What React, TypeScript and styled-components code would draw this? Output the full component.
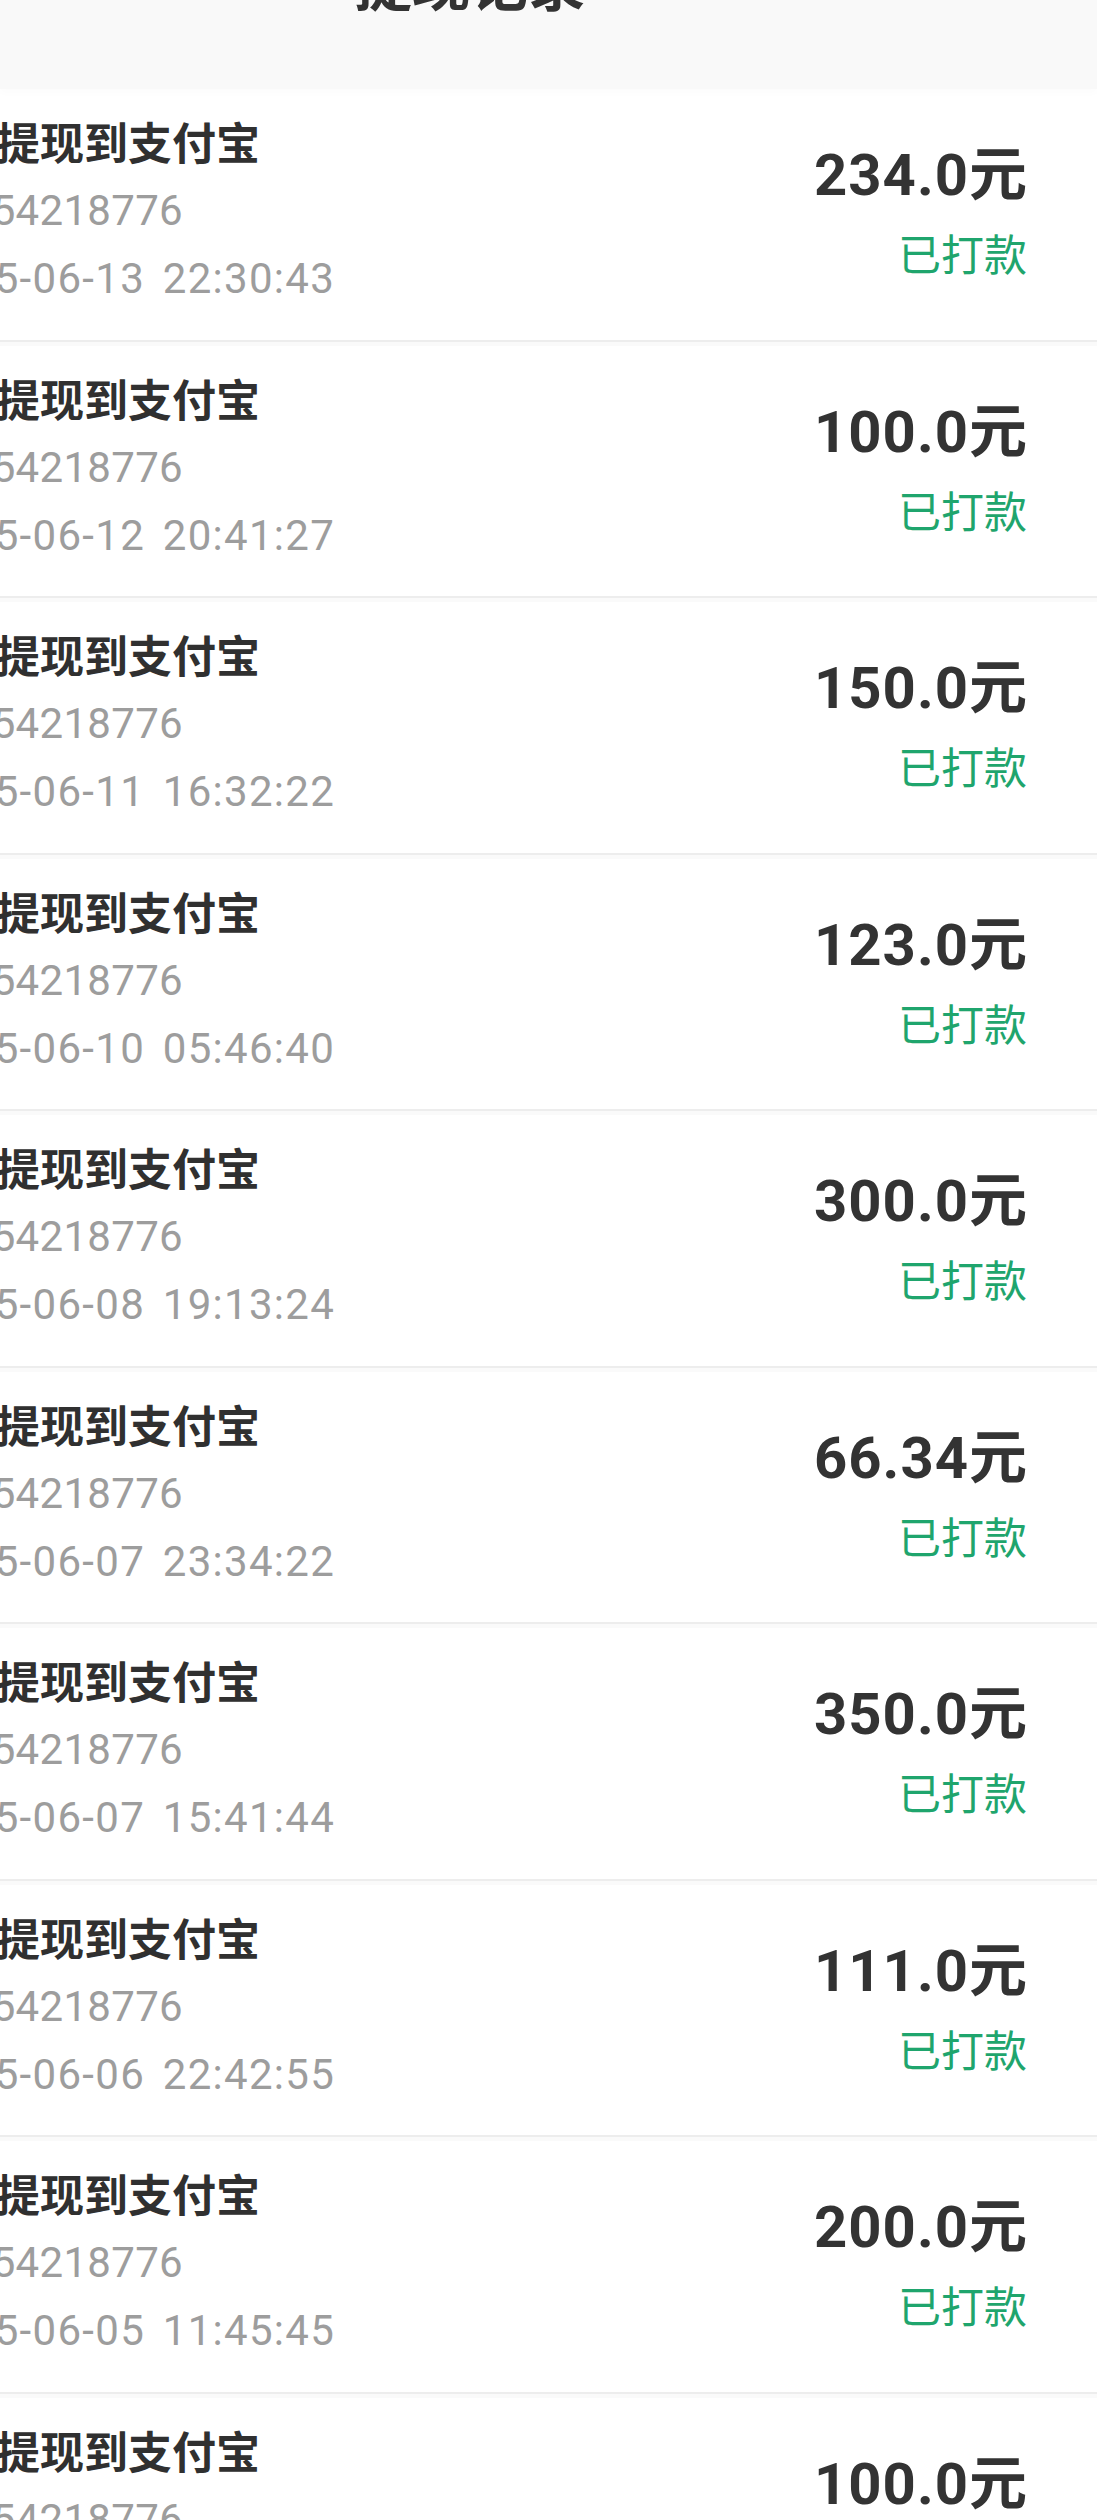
import React from 'react';
import styled, { createGlobalStyle } from 'styled-components';

type Withdrawal = {
  amount: string;
  account: string;
  time: string;
};

const records: Withdrawal[] = [
  { amount: '234.0', account: '13654218776', time: '2025-06-13 22:30:43' },
  { amount: '100.0', account: '13654218776', time: '2025-06-12 20:41:27' },
  { amount: '150.0', account: '13654218776', time: '2025-06-11 16:32:22' },
  { amount: '123.0', account: '13654218776', time: '2025-06-10 05:46:40' },
  { amount: '300.0', account: '13654218776', time: '2025-06-08 19:13:24' },
  { amount: '66.34', account: '13654218776', time: '2025-06-07 23:34:22' },
  { amount: '350.0', account: '13654218776', time: '2025-06-07 15:41:44' },
  { amount: '111.0', account: '13654218776', time: '2025-06-06 22:42:55' },
  { amount: '200.0', account: '13654218776', time: '2025-06-05 11:45:45' },
  { amount: '100.0', account: '13654218776', time: '2025-06-04 09:12:31' },
];

const App = () => {
  return (
    <Page>
      <GlobalStyle />
      <Header>
        <HeaderTitle>提现记录</HeaderTitle>
      </Header>
      <List>
        {records.map((r, i) => (
          <Row key={i}>
            <Info>
              <Title>提现到支付宝</Title>
              <Meta>{r.account}</Meta>
              <Meta $wide>{r.time}</Meta>
            </Info>
            <Side>
              <Amount>
                {r.amount}
                <Unit>元</Unit>
              </Amount>
              <Status>已打款</Status>
            </Side>
          </Row>
        ))}
      </List>
    </Page>
  );
};

const GlobalStyle = createGlobalStyle`
  html, body {
    margin: 0;
    padding: 0;
    background: #ffffff;
    overflow-x: hidden;
  }
  body {
    font-family: Roboto, "Noto Sans CJK SC", sans-serif;
  }
`;

const Page = styled.div`
  width: 1097px;
  background: #fafafa;
  overflow: hidden;
`;

const Header = styled.div`
  height: 89px;
  background: #f9f9f9;
  display: flex;
  justify-content: center;
  padding-right: 157px;
  overflow: hidden;
  box-shadow: 0 4px 8px rgba(0, 0, 0, 0.015);
  position: relative;
`;

const HeaderTitle = styled.h1`
  margin: -59px 0 0;
  font-family: "Noto Sans CJK SC", sans-serif;
  font-size: 58px;
  font-weight: 700;
  line-height: 80px;
  color: #333333;
`;

const List = styled.div`
  display: flex;
  flex-direction: column;
  gap: 4px;
`;

const Row = styled.div`
  height: 252.5px;
  box-sizing: border-box;
  display: flex;
  justify-content: space-between;
  align-items: flex-start;
  padding-right: 70px;
  background: #ffffff;
  border-bottom: 2px solid #ededed;
  overflow: hidden;
`;

const Info = styled.div`
  display: flex;
  flex-direction: column;
  margin-left: -80px;
  padding-top: 19px;
`;

const Title = styled.div`
  padding-left: 76px;
  margin-bottom: 3px;
  font-family: "Noto Sans CJK SC", sans-serif;
  font-size: 44px;
  font-weight: 700;
  line-height: 66px;
  color: #303030;
`;

const Meta = styled.div<{ $wide?: boolean }>`
  font-family: Roboto, sans-serif;
  font-size: 42px;
  line-height: 68px;
  letter-spacing: ${({ $wide }) => ($wide ? '1.3px' : '0.3px')};
  word-spacing: ${({ $wide }) => ($wide ? '6px' : '0')};
  color: #9d9d9d;
  white-space: nowrap;
`;

const Side = styled.div`
  display: flex;
  flex-direction: column;
  align-items: flex-end;
  padding-top: 46px;
`;

const Amount = styled.div`
  font-family: Roboto, sans-serif;
  font-size: 58px;
  font-weight: 700;
  line-height: 70px;
  letter-spacing: 1px;
  color: #333333;
  white-space: nowrap;
`;

const Unit = styled.span`
  font-family: "Noto Sans CJK SC", sans-serif;
  letter-spacing: 0;
`;

const Status = styled.div`
  margin-top: 12px;
  font-family: "Noto Sans CJK SC", sans-serif;
  font-size: 43px;
  line-height: 60px;
  color: #1fa56d;
`;

export default App;
